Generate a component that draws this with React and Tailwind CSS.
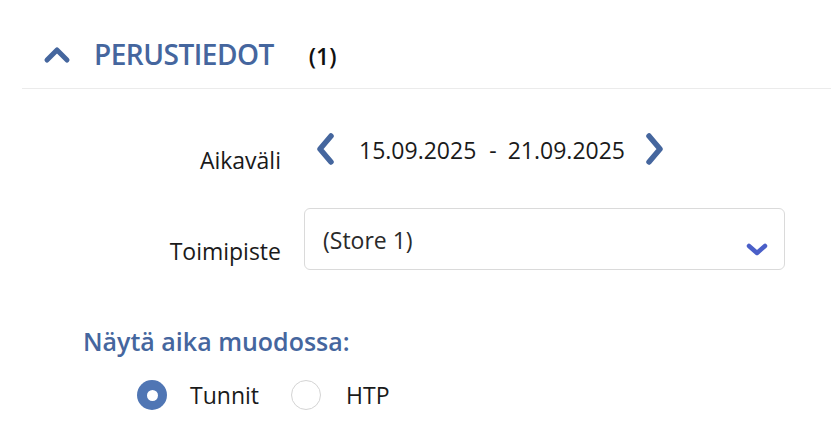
import React from "react";

const font = { fontFamily: '"Open Sans", "Noto Sans", sans-serif' };

export default function App() {
  return (
    <div className="w-[831px] h-[429px] bg-white overflow-hidden" style={font}>
      <div className="ml-[22px] h-[89px] pt-[20px] flex items-center border-b border-[#ebebeb]">
        <svg className="ml-[21px]" width="28" height="20" viewBox="0 0 28 20">
          <path d="M4 16 L14 6 L24 16" fill="none" stroke="#45669e" strokeWidth="5" strokeLinecap="round" strokeLinejoin="round" />
        </svg>
        <span className="ml-[23px] text-[28px] leading-none font-semibold text-[#45669e] tracking-[-0.5px]">PERUSTIEDOT</span>
        <span className="ml-[35px] mt-[4px] text-[23px] leading-none font-semibold text-[#111]">(1)</span>
      </div>

      <div className="flex items-start mt-[44px] text-[#1a1a1a]">
        <div className="w-[281px] shrink-0 text-right text-[23px] leading-none mt-[16px]">Aikaväli</div>
        <svg className="ml-[34px] shrink-0" width="21" height="32" viewBox="0 0 21 32">
          <path d="M16 3 L5 16 L16 29" fill="none" stroke="#45669e" strokeWidth="5.5" strokeLinecap="round" strokeLinejoin="round" />
        </svg>
        <div className="ml-[23px] mt-[6px] flex text-[23px] leading-none">
          <span>15.09.2025</span>
          <span className="ml-[13px]">-</span>
          <span className="ml-[11px]">21.09.2025</span>
        </div>
        <svg className="ml-[19px] shrink-0" width="21" height="32" viewBox="0 0 21 32">
          <path d="M5 3 L16 16 L5 29" fill="none" stroke="#45669e" strokeWidth="5.5" strokeLinecap="round" strokeLinejoin="round" />
        </svg>
      </div>

      <div className="flex items-start mt-[36px]">
        <div className="w-[281px] shrink-0 text-right text-[23px] leading-none text-[#1a1a1a] mt-[32px]">Toimipiste</div>
        <div className="ml-[23px] w-[481px] h-[62px] rounded-[6px] border border-[#dadada] flex items-start pl-[18px] pt-[20px] relative">
          <span className="text-[23px] leading-none text-[#2a2a2a]">(Store 1)</span>
          <svg className="absolute right-[15px] top-[33px]" width="24" height="16" viewBox="0 0 24 16">
            <path d="M4 4 L12 11 L20 4" fill="none" stroke="#4a5fc8" strokeWidth="4.5" strokeLinecap="round" strokeLinejoin="round" />
          </svg>
        </div>
      </div>

      <div className="ml-[83px] mt-[59px] text-[25px] leading-none font-semibold text-[#45669e]">Näytä aika muodossa:</div>

      <div className="flex items-center ml-[137px] mt-[26px] text-[23px] leading-none text-[#1a1a1a]">
        <div className="w-[30px] h-[30px] shrink-0 rounded-full bg-[#5076b4] flex items-center justify-center">
          <div className="w-[11px] h-[11px] rounded-full bg-white" />
        </div>
        <span className="ml-[23px]">Tunnit</span>
        <div className="ml-[32px] w-[30px] h-[30px] shrink-0 rounded-full border border-[#d4d4d4] bg-white" />
        <span className="ml-[25px]">HTP</span>
      </div>
    </div>
  );
}
